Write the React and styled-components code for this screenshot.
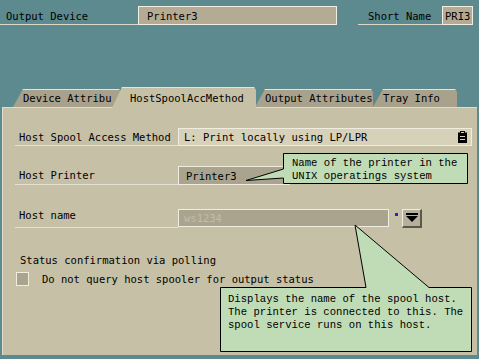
import React from 'react';
import styled, { createGlobalStyle } from 'styled-components';

const GlobalStyle = createGlobalStyle`
    * { box-sizing: border-box; }
    body {
        margin: 0;
        background: #5c8a8e;
    }
`

const Screen = styled.div`
    position: relative;
    width: 479px;
    height: 359px;
    background: #5c8a8e;
    font-family: "DejaVu Sans Mono", "Liberation Mono", monospace;
    font-size: 10.5px;
    color: #000;
    overflow: hidden;
`

const TopBar = styled.div`
    display: flex;
    padding-top: 6px;
    height: 25px;
`

const TopLabel = styled.div`
    width: ${p => p.$w}px;
    margin-left: ${p => p.$ml || 0}px;
    padding-left: ${p => p.$pl}px;
    height: 19px;
    display: flex;
    align-items: center;
    padding-top: 2px;
    border-bottom: 1px solid #dcd8c8;
`

const TopField = styled.div`
    width: ${p => p.$w}px;
    height: 19px;
    padding-left: ${p => p.$pl}px;
    display: flex;
    align-items: center;
    background: #b3ab93;
    border: 1px solid #f2eee2;
`

const Tabs = styled.div`
    display: flex;
    align-items: flex-end;
    height: 20px;
    margin-top: 62px;
    padding-left: 13px;
    position: relative;
    z-index: 2;
`

const Tab = styled.div`
    width: ${p => p.$w}px;
    margin-left: ${p => p.$ml || 0}px;
    padding-left: ${p => p.$pl}px;
    height: ${p => (p.$active ? 21 : 18)}px;
    margin-bottom: ${p => (p.$active ? -1 : 0)}px;
    display: flex;
    align-items: center;
    white-space: nowrap;
    overflow: hidden;
    background: ${p => (p.$active ? '#c6c0a6' : '#a8a28c')};
    box-shadow: inset 0 1px 0 #e8e4d4;
    clip-path: polygon(10px 0, calc(100% - 2px) 0, 100% 3px, 100% 100%, 0 100%);
    position: relative;
    z-index: ${p => (p.$active ? 3 : 1)};
`

const Panel = styled.div`
    margin: 0 2px;
    height: 248px;
    background: #c6c0a6;
    border-top: 1px solid #e2dcc8;
    border-left: 1px solid #e2dcc8;
    padding: 20px 0 0 12px;
`

const Row = styled.div`
    display: grid;
    grid-template-columns: 163px 1fr;
    height: ${p => p.$h}px;
    margin-bottom: ${p => p.$mb}px;
`

const Label = styled.div`
    display: flex;
    align-items: ${p => (p.$top ? 'flex-start' : 'center')};
    padding-left: 4px;
    padding-top: ${p => (p.$top ? 1 : 0)}px;
    border-bottom: 1px solid #e4e0d2;
`

const Controls = styled.div`
    display: flex;
    align-items: center;
`

const Field = styled.div`
    width: ${p => p.$w}px;
    height: ${p => p.$h}px;
    display: flex;
    align-items: center;
    justify-content: space-between;
    padding: 0 4px 0 ${p => p.$pl || 5}px;
    background: ${p => (p.$light ? '#d7d1ba' : '#aaa48f')};
    border: 1px solid #f0ecdf;
    color: ${p => (p.$disabled ? '#c3bba6' : '#000')};
`

const Required = styled.span`
    width: 3px;
    height: 3px;
    background: #2222ee;
    margin: -7px 4px 0 6px;
`

const DropButton = styled.div`
    width: 20px;
    height: 19px;
    margin-left: 0px;
    display: flex;
    align-items: center;
    justify-content: center;
    background: #b5af9c;
    border-top: 1px solid #f0ecdf;
    border-left: 1px solid #f0ecdf;
    border-bottom: 2px solid #5c5848;
    border-right: 2px solid #5c5848;
`

const Heading = styled.div`
    padding-left: 5px;
    height: 13px;
    margin-bottom: 5px;
    display: flex;
    align-items: center;
`

const CheckRow = styled.div`
    display: flex;
    align-items: center;
    padding-left: 1px;
    height: 15px;
`

const Checkbox = styled.div`
    width: 13px;
    height: 14px;
    background: #aaa48f;
    border: 1px solid #f0ecdf;
    margin-right: 13px;
`

const Overlay = styled.svg`
    position: absolute;
    left: 0;
    top: 0;
    z-index: 5;
`

const CalloutText = styled.div`
    position: absolute;
    left: ${p => p.$x}px;
    top: ${p => p.$y}px;
    z-index: 6;
    font-family: "Liberation Mono", "Courier New", monospace;
    font-size: 10.6px;
    line-height: ${p => p.$lh}px;
    white-space: pre;
    color: #000;
`

const ClipboardIcon = () => (
  <svg width="9" height="12" viewBox="0 0 9 12">
    <rect x="0" y="1.5" width="9" height="10.5" fill="#000" />
    <rect x="2" y="0" width="5" height="3" fill="#000" />
    <rect x="3" y="1" width="3" height="1" fill="#d7d1ba" />
    <rect x="2" y="5" width="5" height="1" fill="#d7d1ba" />
    <rect x="2" y="8" width="5" height="1" fill="#d7d1ba" />
  </svg>
)

const DownIcon = () => (
  <svg width="12" height="9" viewBox="0 0 12 9">
    <rect x="0" y="0" width="12" height="2" fill="#000" />
    <polygon points="0,3 12,3 6,9" fill="#000" />
  </svg>
)

const App = () => {
  return (
    <Screen>
      <GlobalStyle />
      <TopBar>
        <TopLabel $w={138} $pl={6}>Output Device</TopLabel>
        <TopField $w={199} $pl={8}>Printer3</TopField>
        <TopLabel $w={84} $ml={21} $pl={10}>Short Name</TopLabel>
        <TopField $w={31} $pl={2}>PRI3</TopField>
      </TopBar>

      <Tabs>
        <Tab $w={108} $pl={10}>Device Attribu</Tab>
        <Tab $w={144} $ml={-9} $pl={18} $active>HostSpoolAccMethod</Tab>
        <Tab $w={118} $ml={-1} $pl={10}>Output Attributes</Tab>
        <Tab $w={84} $pl={10}>Tray Info</Tab>
      </Tabs>

      <Panel>
        <Row $h={18} $mb={20}>
          <Label>Host Spool Access Method</Label>
          <Controls>
            <Field $w={294} $h={18} $light>
              L: Print locally using LP/LPR
              <ClipboardIcon />
            </Field>
          </Controls>
        </Row>
        <Row $h={19} $mb={23}>
          <Label>Host Printer</Label>
          <Controls>
            <Field $w={112} $h={19} $pl={7}>Printer3</Field>
          </Controls>
        </Row>
        <Row $h={20} $mb={25}>
          <Label $top>Host name</Label>
          <Controls>
            <Field $w={211} $h={18} $disabled>ws1234</Field>
            <Required />
            <DropButton><DownIcon /></DropButton>
          </Controls>
        </Row>
        <Heading>Status confirmation via polling</Heading>
        <CheckRow>
          <Checkbox />
          Do not query host spooler for output status
        </CheckRow>
      </Panel>

      <Overlay width="479" height="359" viewBox="0 0 479 359">
        <path d="M283.5,153.5 H467.5 V183.5 H283.5 V178 L246,180.5 L283.5,169 Z" fill="#c0dcb6" stroke="#000" strokeWidth="1" />
        <path d="M220.5,287.5 H366 L355,225 L429,287.5 H471.5 V351.5 H220.5 Z" fill="#c0dcb6" stroke="#000" strokeWidth="1" />
      </Overlay>
      <CalloutText $x={292} $y={157} $lh={12.5}>{'Name of the printer in the\nUNIX operatings system'}</CalloutText>
      <CalloutText $x={228} $y={293} $lh={13}>{'Displays the name of the spool host.\nThe printer is connected to this. The\nspool service runs on this host.'}</CalloutText>
    </Screen>
  );
};

export default App;
